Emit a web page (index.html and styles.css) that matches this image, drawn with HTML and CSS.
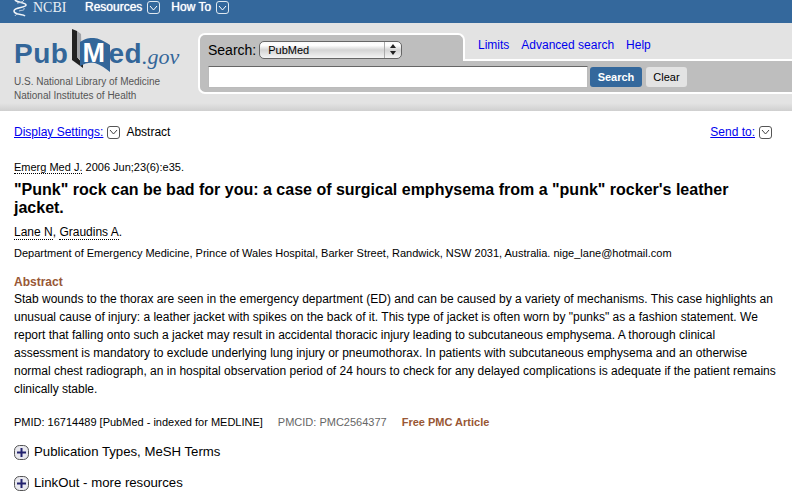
FILE: index.html
```html
<!DOCTYPE html>
<html lang="en">
<head>
<meta charset="UTF-8">
<title>PubMed - Punk rock</title>
<link rel="stylesheet" href="styles.css">
</head>
<body>
<div class="topbar">
    <svg class="helix" width="16" height="18" viewBox="0 0 16 18"><path d="M3 1c2 3 11 2 11 5S2 8 2 12s9 3 11 5" fill="none" stroke="#f0f4f8" stroke-width="1.6"/><path d="M12 1C11 3 7 4 5 4M12 9c1 3-3 2-5 3M3 17c0-1 2-2 3-2" fill="none" stroke="#c5d4e3" stroke-width="1"/></svg>
    <span class="ncbi">NCBI</span>
    <span class="toplink">Resources</span>
    <span class="topchev"><svg width="9" height="6" viewBox="0 0 9 6"><path d="M1 1l3.5 4L8 1" fill="none" stroke="#fff" stroke-width="1"/></svg></span>
    <span class="toplink howto">How To</span>
    <span class="topchev"><svg width="9" height="6" viewBox="0 0 9 6"><path d="M1 1l3.5 4L8 1" fill="none" stroke="#fff" stroke-width="1"/></svg></span>
</div>

<div class="masthead">
    <div class="logo">
        <div class="wordmark">
            <span class="pm">Pub</span>
            <svg class="book" width="40" height="50" viewBox="0 0 40 50">
                <path d="M4 5v31l11 8v-4l-6-7V7z" fill="#222"/>
                <path d="M9 7l4 3 1 28-5-5z" fill="#a2a4a8"/>
                <path d="M12 18c6-4 9-4 14-4 4 0 10 3 16 7v27c-5-4-9-7-15-9-5-1-10 0-15 3z" fill="#336699"/>
                <text x="14.5" y="38" class="book-m">M</text>
            </svg>
            <span class="pm">ed</span><span class="gov">.gov</span>
        </div>
        <div class="nlm">U.S. National Library of Medicine</div>
        <div class="nlm">National Institutes of Health</div>
    </div>
    <div class="search">
        <div class="search-top">
            <div class="tab">
                <label class="search-label">Search:</label>
                <div class="select">
                    <span class="select-text">PubMed</span>
                    <span class="select-arrows"><svg width="6" height="11" viewBox="0 0 6 11"><path d="M3 0l3 4H0zM3 11L0 7h6z" fill="#222"/></svg></span>
                </div>
            </div>
            <div class="tablinks">
                <a href="#">Limits</a>
                <a href="#">Advanced search</a>
                <a href="#">Help</a>
            </div>
        </div>
        <div class="search-row">
            <input class="term" type="text">
            <button class="btn-search">Search</button>
            <button class="btn-clear">Clear</button>
        </div>
    </div>
</div>

<div class="display-bar">
    <a href="#">Display Settings:</a>
    <span class="chev"><svg width="9" height="6" viewBox="0 0 9 6"><path d="M1 1l3.5 4L8 1" fill="none" stroke="#444" stroke-width="1"/></svg></span>
    <span class="format">Abstract</span>
    <span class="spacer"></span>
    <a href="#">Send to:</a>
    <span class="chev"><svg width="9" height="6" viewBox="0 0 9 6"><path d="M1 1l3.5 4L8 1" fill="none" stroke="#444" stroke-width="1"/></svg></span>
</div>

<div class="article">
    <div class="cite"><span class="dotted">Emerg Med J.</span> 2006 Jun;23(6):e35.</div>
    <h1>"Punk" rock can be bad for you: a case of surgical emphysema from a "punk" rocker's leather jacket.</h1>
    <div class="auths"><span class="dotted">Lane N</span>, <span class="dotted">Graudins A</span>.</div>
    <div class="affil">Department of Emergency Medicine, Prince of Wales Hospital, Barker Street, Randwick, NSW 2031, Australia. nige_lane@hotmail.com</div>
    <h3>Abstract</h3>
    <p class="abstract">Stab wounds to the thorax are seen in the emergency department (ED) and can be caused by a variety of mechanisms. This case highlights an unusual cause of injury: a leather jacket with spikes on the back of it. This type of jacket is often worn by "punks" as a fashion statement. We report that falling onto such a jacket may result in accidental thoracic injury leading to subcutaneous emphysema. A thorough clinical assessment is mandatory to exclude underlying lung injury or pneumothorax. In patients with subcutaneous emphysema and an otherwise normal chest radiograph, an in hospital observation period of 24 hours to check for any delayed complications is adequate if the patient remains clinically stable.</p>
    <div class="ids">
        <span>PMID: 16714489 [PubMed - indexed for MEDLINE]</span>
        <span class="pmcid">PMCID: PMC2564377</span>
        <span class="free">Free PMC Article</span>
    </div>
    <div class="expander">
        <svg width="15" height="15" viewBox="0 0 15 15"><rect x=".5" y=".5" width="14" height="14" rx="5" fill="#e8e8ee" stroke="#555"/><path d="M7.5 3v9M3 7.5h9" stroke="#22226e" stroke-width="2"/></svg>
        <span>Publication Types, MeSH Terms</span>
    </div>
    <div class="expander">
        <svg width="15" height="15" viewBox="0 0 15 15"><rect x=".5" y=".5" width="14" height="14" rx="5" fill="#e8e8ee" stroke="#555"/><path d="M7.5 3v9M3 7.5h9" stroke="#22226e" stroke-width="2"/></svg>
        <span>LinkOut - more resources</span>
    </div>
</div>
</body>
</html>
```

FILE: styles.css
```css
body {
    margin: 0;
    font-family: "Liberation Sans", Arial, sans-serif;
    font-size: 12px;
    color: #000;
    background: #fff;
    overflow: hidden;
}
a {
    color: #0000ee;
}
.topbar {
    height: 23px;
    background: #34689c;
    display: flex;
    align-items: flex-start;
    padding-left: 12px;
    color: #fff;
    overflow: hidden;
}
.helix {
    margin-top: -1px;
    flex: none;
}
.ncbi {
    font-family: "Liberation Serif", serif;
    font-size: 14px;
    line-height: 15px;
    color: #e8eef5;
    margin-left: 5px;
    width: 52px;
}
.toplink {
    font-size: 12px;
    line-height: 14px;
    text-shadow: 0 0 1px #fff;
}
.howto {
    margin-left: 11px;
}
.topchev {
    width: 11px;
    height: 11px;
    border: 1px solid #dfe8f0;
    border-radius: 3px;
    margin: 1px 0 0 5px;
    display: flex;
    align-items: center;
    justify-content: center;
}
.masthead {
    height: 88px;
    background: linear-gradient(#e3e3e3 0, #e3e3e3 80px, #cfcfcf 88px);
    display: flex;
}
.logo {
    width: 198px;
    flex: none;
    padding: 7px 0 0 14px;
    box-sizing: border-box;
}
.wordmark {
    display: flex;
    align-items: flex-start;
    height: 45px;
}
.pm {
    font-weight: bold;
    font-size: 28px;
    line-height: 32px;
    letter-spacing: 0.5px;
    margin-top: 8px;
    color: #336699;
}
.book {
    margin-top: -6px;
    flex: none;
    overflow: visible;
}
.book-m {
    font-family: "Liberation Sans", sans-serif;
    font-weight: bold;
    font-size: 27px;
    fill: #fff;
}
.gov {
    font-family: "Liberation Serif", serif;
    font-style: italic;
    font-size: 22px;
    line-height: 26px;
    margin-top: 14px;
    color: #336699;
}
.nlm {
    font-size: 10px;
    line-height: 14px;
    color: #555;
}
.search {
    flex: 1;
    padding-top: 10px;
}
.search-top {
    display: flex;
    height: 26px;
}
.tab {
    width: 267px;
    box-sizing: border-box;
    height: 28px;
    position: relative;
    z-index: 1;
    background: #bebebe;
    border: 2px solid #fff;
    border-bottom: 0;
    border-radius: 7px 7px 0 0;
    display: flex;
    align-items: center;
    padding: 3px 0 0 8px;
}
.search-label {
    font-size: 14px;
}
.select {
    width: 141px;
    height: 16px;
    margin-left: 3px;
    border: 1px solid #666;
    border-radius: 5px;
    background: linear-gradient(#fafafa, #fff 20%, #d4d4d4 50%, #f4f4f4);
    display: flex;
    align-items: center;
    font-size: 11px;
}
.select-text {
    margin-left: 8px;
    flex: 1;
}
.select-arrows {
    width: 16px;
    height: 16px;
    border-left: 1px solid #aaa;
    display: flex;
    align-items: center;
    justify-content: center;
}
.tablinks {
    display: flex;
    gap: 12px;
    padding: 5px 0 0 13px;
}
.tablinks a {
    text-decoration: none;
    line-height: 14px;
}
.search-row {
    height: 35px;
    box-sizing: border-box;
    background: #bebebe;
    border: 2px solid #fff;
    border-right: 0;
    border-radius: 0 0 0 7px;
    display: flex;
    align-items: flex-start;
    padding: 5px 0 0 8px;
}
.term {
    width: 380px;
    height: 22px;
    box-sizing: border-box;
    margin: 0;
    border: 1px solid #bbb;
    border-top: 1px solid #666;
    background: #fff;
}
.btn-search, .btn-clear {
    height: 20px;
    border: 0;
    border-radius: 3px;
    font-family: "Liberation Sans", sans-serif;
    font-size: 11px;
    padding: 0;
    margin-top: 1px;
}
.btn-search {
    width: 52px;
    margin-left: 2px;
    background: #34689c;
    color: #fff;
    font-weight: bold;
}
.btn-clear {
    width: 41px;
    margin-left: 4px;
    background: #e3e3e3;
    color: #000;
}
.display-bar {
    display: flex;
    align-items: center;
    height: 16px;
    padding: 13px 20px 0 14px;
}
.spacer {
    flex: 1;
}
.chev {
    width: 11px;
    height: 11px;
    border: 1px solid #555;
    border-radius: 3px;
    margin-left: 4px;
    display: flex;
    align-items: center;
    justify-content: center;
}
.format {
    margin-left: 6px;
}
.article {
    padding: 20px 14px 0 14px;
}
.cite {
    font-size: 11px;
    line-height: 14px;
}
.dotted {
    border-bottom: 1px dotted #000;
}
h1 {
    font-size: 16px;
    line-height: 18px;
    margin: 7px 0 0;
    max-width: 730px;
}
.auths {
    font-size: 12px;
    line-height: 14px;
    margin-top: 8px;
}
.affil {
    font-size: 11px;
    line-height: 14px;
    margin-top: 7px;
}
h3 {
    font-size: 12px;
    line-height: 14px;
    margin: 15px 0 0;
    color: #985735;
}
.abstract {
    font-size: 12px;
    line-height: 18px;
    margin: 1px 0 0;
}
.ids {
    font-size: 11px;
    line-height: 14px;
    margin-top: 17px;
    display: flex;
}
.pmcid {
    margin-left: 15px;
    color: #666;
}
.free {
    margin-left: 15px;
    color: #985735;
    font-weight: bold;
}
.expander {
    display: flex;
    align-items: center;
    gap: 5px;
    font-size: 13.2px;
    line-height: 16px;
    margin-top: 15px;
}
```
